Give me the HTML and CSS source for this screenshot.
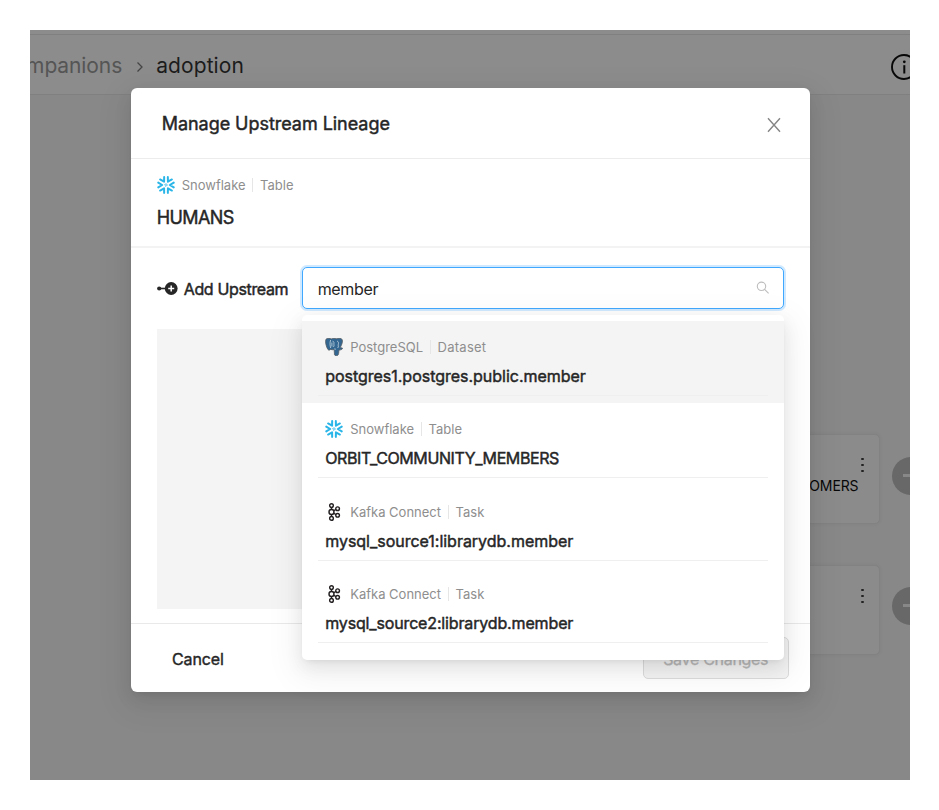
FILE: index.html
```html
<!DOCTYPE html>
<html lang="en">
<head>
<meta charset="utf-8">
<title>Manage Upstream Lineage</title>
<link rel="stylesheet" href="styles.css">
</head>
<body>
<svg width="0" height="0" class="defs">
  <symbol id="snow" viewBox="0 0 36 36">
    <g fill="none" stroke="#29b5e8" stroke-width="4" stroke-linecap="round" stroke-linejoin="round">
      <path id="arm" d="M2.500 13.300 10.300 18 2.500 22.700"/>
      <use href="#arm" transform="rotate(60 18 18)"/>
      <use href="#arm" transform="rotate(120 18 18)"/>
      <use href="#arm" transform="rotate(180 18 18)"/>
      <use href="#arm" transform="rotate(240 18 18)"/>
      <use href="#arm" transform="rotate(300 18 18)"/>
    </g>
    <path d="M18 15.200 20.800 18 18 20.800 15.200 18z" fill="none" stroke="#29b5e8" stroke-width="1.800"/>
  </symbol>
  <symbol id="kafka" viewBox="0 0 18 18">
    <g fill="none" stroke="#231f20" stroke-width="1.400">
      <circle cx="6.500" cy="2.600" r="1.850"/><circle cx="6.500" cy="9" r="2.500"/><circle cx="6.500" cy="15.400" r="1.850"/>
      <circle cx="12.600" cy="5.700" r="1.850"/><circle cx="12.600" cy="12.300" r="1.850"/>
      <path d="M6.500 4.500v2M6.500 11.500v2M8.700 7.700l2.300-1.200M8.700 10.300l2.300 1.200"/>
    </g>
  </symbol>
  <symbol id="postgres" viewBox="0 0 18 18">
    <path d="M1 1.200C2.500-.1 5 .3 6.300.9 8 .1 9.800.1 11.200.8c2-.9 4.600-.7 5.900.6 1 1.600-.3 5.700-1.900 8.200.7.500 1.900 0 2.300.6.100 1-1.500 1.900-3.500 1.800-.3 2.200-.2 5.100-1.500 5.500-1.300.4-2.700 0-3-.8-.3-1.500-.1-3.400-.4-5.200-1.300.3-2.500.4-3.400-.1-1 .8-2 1-2.700.2C1.500 9.600-.3 3.400 1 1.200Z" fill="#336791" stroke="#555d63" stroke-width=".8"/>
    <path d="M5.600 2C4.700 4.800 5 7.600 5.700 10M7.600 3.200c1.300.3 1.500 1.300 1.300 2.300-.1 1.500.6 2.300-.6 3.500M6.900 4.500v4M12.200 3.100c1.400.7 1.500 2 1.100 3.200-.5 1.300.8 2-.6 3.700M9.900 10.300l.3 1.600" fill="none" stroke="#d3e0ea" stroke-width=".75"/>
  </symbol>
</svg>
<div class="frame">
  <div class="strip"></div>
  <header class="topbar">
    <nav class="crumbs"><span class="crumb-parent">mpanions</span>
      <svg class="chev" width="8" height="12" viewBox="0 0 8 12"><path d="M1.500 1.500 6 6l-4.500 4.500" fill="none" stroke="#454545" stroke-width="1.300"/></svg>
      <span class="crumb-now">adoption</span></nav>
    <svg class="info" width="26" height="26" viewBox="0 0 26 26"><circle cx="13" cy="13" r="12" fill="none" stroke="#080808" stroke-width="1.900"/><path d="M13.300 11.200v8.300" stroke="#080808" stroke-width="2"/><circle cx="13.300" cy="7.800" r="1.400" fill="#080808"/></svg>
  </header>
  <main class="canvas">
    <div class="node node-a"><i class="dots"></i><span class="node-name">CUSTOMERS</span></div>
    <div class="node node-b"><i class="dots"></i></div>
    <div class="knob knob-a"></div>
    <div class="knob knob-b"></div>
  </main>
  <section class="modal">
    <div class="modal-head">
      <h1>Manage Upstream Lineage</h1>
      <svg class="close" width="14" height="16" viewBox="0 0 14 16"><path d="M1 1.200 13 14.800M13 1.200 1 14.800" fill="none" stroke="#858585" stroke-width="1.400"/></svg>
    </div>
    <div class="entity">
      <div class="meta"><svg class="logo"><use href="#snow"/></svg><span>Snowflake</span><i class="bar"></i><span>Table</span></div>
      <h2>HUMANS</h2>
    </div>
    <div class="body">
      <div class="search-row">
        <label><svg width="21" height="14" viewBox="0 0 21 14"><path d="M2 6.500h8" stroke="#262626" stroke-width="1.600"/><circle cx="2.200" cy="6.500" r="2.100" fill="#262626"/><circle cx="14.200" cy="6.500" r="6.400" fill="#262626"/><path d="M14.200 3.500v6M11.200 6.500h6" stroke="#fff" stroke-width="1.500"/></svg><span>Add Upstream</span></label>
        <div class="field">
          <span class="query">member</span>
          <svg width="14" height="14" viewBox="0 0 14 14"><circle cx="5.500" cy="5.300" r="4.200" fill="none" stroke="#bdbdbd" stroke-width="1.100"/><path d="m8.600 8.400 4 4" stroke="#bdbdbd" stroke-width="1.200"/></svg>
          <div class="menu">
            <div class="option active"><div class="inner"><div class="meta"><svg class="logo"><use href="#postgres"/></svg><span>PostgreSQL</span><i class="bar"></i><span class="wide">Dataset</span></div><div class="name">postgres1.postgres.public.member</div></div></div>
            <div class="option"><div class="inner"><div class="meta"><svg class="logo"><use href="#snow"/></svg><span>Snowflake</span><i class="bar"></i><span>Table</span></div><div class="name caps">ORBIT_COMMUNITY_MEMBERS</div></div></div>
            <div class="option"><div class="inner"><div class="meta"><svg class="logo"><use href="#kafka"/></svg><span>Kafka Connect</span><i class="bar"></i><span>Task</span></div><div class="name">mysql_source1:librarydb.member</div></div></div>
            <div class="option"><div class="inner"><div class="meta"><svg class="logo"><use href="#kafka"/></svg><span>Kafka Connect</span><i class="bar"></i><span>Task</span></div><div class="name tight">mysql_source2:librarydb.member</div></div></div>
          </div>
        </div>
      </div>
      <div class="empty"></div>
    </div>
    <div class="modal-foot"><span class="cancel">Cancel</span><span class="save">Save Changes</span></div>
  </section>
</div>
</body>
</html>
```
FILE: styles.css
```css
* { box-sizing: border-box; }
body { margin: 0; padding: 30px; background: #fff; font-family: Inter, "Liberation Sans", sans-serif; color: #262626; }
.defs { position: absolute; }
h1, h2 { margin: 0; font-weight: 400; }
.frame { position: relative; width: 880px; height: 750px; overflow: hidden; background: #888; }
.strip { height: 5px; background: #8c8c8c; border-bottom: 1px solid #808080; }
.topbar { height: 60px; background: #8c8c8c; border-bottom: 1px solid #808080; display: flex; align-items: center; justify-content: space-between; }
.crumbs { display: flex; align-items: center; font-size: 21px; line-height: 28px; width: 214px; padding-top: 2px; justify-content: flex-end; white-space: nowrap; flex: none; }
.crumb-parent { color: #555; letter-spacing: -.1px; }
.chev { margin: 2px 12px 0 14px; flex: none; }
.crumb-now { color: #1c1c1c; letter-spacing: .1px; }
.info { margin: 5px -7px 0 0; flex: none; }

.node { position: absolute; left: 560px; width: 290px; height: 90px; border: 1px solid #828282; border-radius: 5px; background: #8b8b8b; box-shadow: 0 0 4px rgba(0,0,0,.05); }
.node-a { top: 404px; }
.node-b { top: 535px; }
.dots { position: absolute; right: 15.500px; top: 23px; width: 2.300px; height: 2.300px; border-radius: 50%; background: #222; box-shadow: 0 6px #222, 0 12px #222; }
.node-name { position: absolute; right: 20.500px; top: 42px; font-size: 14px; line-height: 18px; color: #080808; letter-spacing: -.1px; }
.knob { position: absolute; left: 862px; width: 38px; height: 38px; border-radius: 50%; background: #686868; }
.knob::after { content: ""; position: absolute; left: 11px; top: 17px; width: 16px; height: 3px; background: #888; }
.knob-a { top: 427px; }
.knob-b { top: 557px; }

.modal { position: absolute; left: 100.700px; top: 57.600px; width: 679px; height: 604px; background: #fff; border-radius: 6px; box-shadow: 0 3px 7px -4px rgba(0,0,0,.12), 0 7px 18px rgba(0,0,0,.08), 0 10px 32px 9px rgba(0,0,0,.05); display: flex; flex-direction: column; }
.modal-head { height: 71px; border-bottom: 1px solid #ececec; padding: 2px 29px 0 31px; display: flex; align-items: center; justify-content: space-between; }
.close { margin-top: 2px; }
h1 { font-size: 18px; line-height: 24px; letter-spacing: -.04px; -webkit-text-stroke: .45px #262626; }
.entity { height: 89px; border-bottom: 2px solid #f3f3f3; padding: 16.500px 26px; }
.meta { display: flex; align-items: center; height: 20px; font-size: 13px; color: #8e8e8e; white-space: nowrap; }
.logo { width: 18px; height: 18px; margin-right: 7px; flex: none; }
.bar { width: 1px; height: 14px; background: #e6e6e6; margin: 0 7px 0 6.500px; }
.wide { letter-spacing: .25px; }
h2 { font-size: 18px; line-height: 24px; margin-top: 10.500px; letter-spacing: -.6px; -webkit-text-stroke: .45px #262626; }
.body { flex: 1; padding: 19px 26px 0; }
.search-row { display: flex; align-items: center; justify-content: space-between; }
label { display: flex; align-items: center; gap: 6px; padding-top: 2px; font-size: 16px; line-height: 22px; white-space: nowrap; }
label span { -webkit-text-stroke: .45px #262626; letter-spacing: -.35px; }
.field { position: relative; left: .5px; width: 482px; height: 42px; border: 1.500px solid #40a9ff; border-radius: 5px; box-shadow: 0 0 0 2px rgba(24,144,255,.2); display: flex; align-items: center; justify-content: space-between; padding: 0 13px 0 14.500px; font-size: 16px; background: #fff; }
.query { letter-spacing: -.35px; padding-top: 2px; }
.menu { position: absolute; left: -1px; top: 47px; width: 482px; height: 345px; background: #fff; border-radius: 5px; padding-top: 6px; box-shadow: 0 3px 7px -4px rgba(0,0,0,.12), 0 7px 18px rgba(0,0,0,.08), 0 10px 32px 9px rgba(0,0,0,.05); }
.option { height: 82.400px; padding: 0 16px; }
.option.active { background: #f4f4f4; }
.inner { height: 75.500px; border-bottom: 1.500px solid #efefef; padding: 16.200px 7px 0; }
.name { font-size: 16px; line-height: 22px; margin-top: 8px; white-space: nowrap; letter-spacing: -.02px; -webkit-text-stroke: .45px #262626; }
.caps { letter-spacing: -.4px; }
.tight { letter-spacing: -.15px; }
.empty { margin-top: 20px; height: 280px; background: #f4f4f4; }
.modal-foot { height: 69px; border-top: 1px solid #e9e9e9; padding: 13px 21px 13px 41.300px; display: flex; justify-content: space-between; align-items: center; font-size: 16px; }
.cancel { -webkit-text-stroke: .4px #262626; padding-top: 2px; letter-spacing: -.1px; }
.save { width: 146px; height: 42px; margin-top: 1px; border: 1px solid #dcdcdc; border-radius: 5px; background: #f4f4f4; color: #b8b8b8; text-align: center; line-height: 42px; letter-spacing: -.3px; -webkit-text-stroke: .3px #b8b8b8; }
```
